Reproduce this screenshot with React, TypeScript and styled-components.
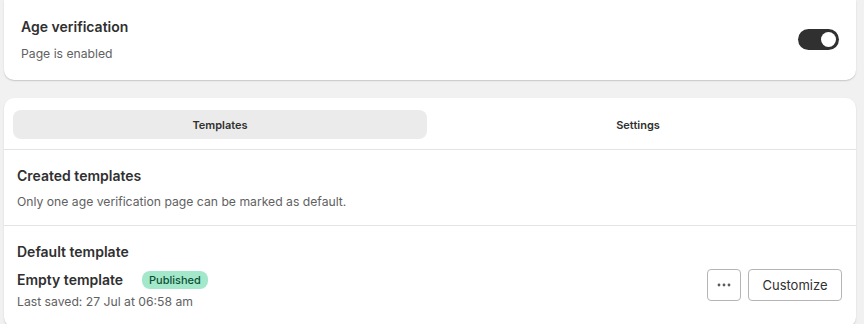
import React from "react";
import styled, { createGlobalStyle } from "styled-components";

const Global = createGlobalStyle`
  html, body { margin: 0; padding: 0; background: #f1f1f1; }
  body { font-family: Inter, "Noto Sans", sans-serif; color: #303030; -webkit-font-smoothing: antialiased; }
  * { box-sizing: border-box; }
`;

const Page = styled.div`
  display: flex;
  flex-direction: column;
  gap: 18px;
  padding: 0 8px 0 4px;
  width: 864px;
  height: 324px;
  overflow: hidden;
`;

const Card = styled.section`
  background: #fff;
  border-radius: 10px;
  box-shadow: 0 1px 0 0 rgba(26, 26, 26, 0.07), 0 1px 2px rgba(0,0,0,0.12);
  flex-shrink: 0;
`;

const TopCard = styled(Card)`
  border-top-left-radius: 0;
  border-top-right-radius: 0;
  height: 80px;
  padding: 18px 17px 0 17px;
  display: flex;
  justify-content: space-between;
  align-items: flex-start;
`;

const Title = styled.div`
  font-size: 14px;
  font-weight: 600;
  color: #303030;
  line-height: 18px;
`;

const Sub = styled.div`
  font-size: 12.2px;
  color: #616161;
  line-height: 16px;
`;

const Stack = styled.div<{ $gap: number }>`
  display: flex;
  flex-direction: column;
  gap: ${(p) => p.$gap}px;
`;

const Toggle = styled.div`
  width: 41px;
  height: 21px;
  border-radius: 11px;
  background: #303030;
  margin-top: 11px;
  margin-right: 0;
  display: flex;
  align-items: center;
  justify-content: flex-end;
  padding-right: 3px;
`;

const Knob = styled.div`
  width: 15px;
  height: 15px;
  border-radius: 50%;
  background: #fff;
`;

const TabBar = styled.div`
  display: grid;
  grid-template-columns: 414px 1fr;
  padding: 12px 7px 10px 9px;
  border-bottom: 1px solid #e3e3e3;
`;

const Tab = styled.button<{ $active?: boolean }>`
  height: 29px;
  border: none;
  border-radius: 8px;
  background: ${(p) => (p.$active ? "#ebebeb" : "transparent")};
  font-family: Inter, sans-serif;
  font-size: 11px;
  font-weight: 600;
  color: #303030;
  cursor: pointer;
`;

const Section = styled.div<{ $border?: boolean }>`
  padding: ${(p) => (p.$border ? "17px 14px 15px 13px" : "17px 14px 17px 13px")};
  border-bottom: ${(p) => (p.$border ? "1px solid #e3e3e3" : "none")};
`;

const Row = styled.div`
  display: flex;
  align-items: center;
  justify-content: space-between;
`;

const NameLine = styled.div`
  display: flex;
  align-items: center;
  gap: 19px;
`;

const Badge = styled.span`
  background: #a4e8cc;
  color: #0c5132;
  font-size: 11px;
  font-weight: 500;
  line-height: 18px;
  padding: 0 7px;
  border-radius: 8px;
`;

const Actions = styled.div`
  display: flex;
  gap: 7px;
  margin-top: 16px;
`;

const Btn = styled.button<{ $w: number }>`
  width: ${(p) => p.$w}px;
  height: 32px;
  background: #fff;
  border: 1px solid #b5b5b5;
  border-radius: 4px;
  font-family: Inter, sans-serif;
  font-size: 13px;
  font-weight: 400;
  color: #303030;
  display: flex;
  align-items: center;
  justify-content: center;
  padding: 0;
`;

const Saved = styled(Sub)`
  margin-top: -5px;
`;

export default function App() {
  return (
    <>
      <Global />
      <Page>
        <TopCard>
          <Stack $gap={10}>
            <Title>Age verification</Title>
            <Sub>Page is enabled</Sub>
          </Stack>
          <Toggle>
            <Knob />
          </Toggle>
        </TopCard>
        <Card>
          <TabBar>
            <Tab $active>Templates</Tab>
            <Tab>Settings</Tab>
          </TabBar>
          <Section $border>
            <Stack $gap={9}>
              <Title>Created templates</Title>
              <Sub>Only one age verification page can be marked as default.</Sub>
            </Stack>
          </Section>
          <Section>
            <Row>
              <Stack $gap={10}>
                <Title>Default template</Title>
                <NameLine>
                  <Title>Empty template</Title>
                  <Badge>Published</Badge>
                </NameLine>
                <Saved>Last saved: 27 Jul at 06:58 am</Saved>
              </Stack>
              <Actions>
                <Btn $w={34}>
                  <svg width="14" height="4" viewBox="0 0 14 4">
                    <circle cx="2" cy="2" r="1.4" fill="#5c5c5c" />
                    <circle cx="7" cy="2" r="1.4" fill="#5c5c5c" />
                    <circle cx="12" cy="2" r="1.4" fill="#5c5c5c" />
                  </svg>
                </Btn>
                <Btn $w={94}>Customize</Btn>
              </Actions>
            </Row>
          </Section>
        </Card>
      </Page>
    </>
  );
}
